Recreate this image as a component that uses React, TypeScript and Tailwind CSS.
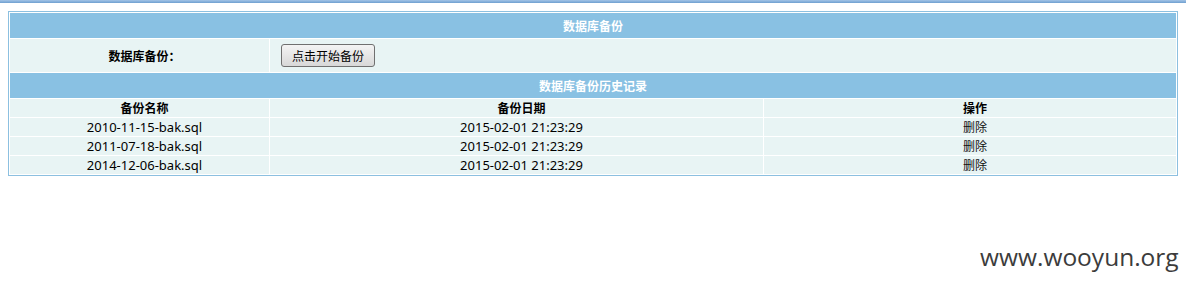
const rows = [
  { name: "2010-11-15-bak.sql", date: "2015-02-01 21:23:29" },
  { name: "2011-07-18-bak.sql", date: "2015-02-01 21:23:29" },
  { name: "2014-12-06-bak.sql", date: "2015-02-01 21:23:29" },
];

const font = "font-['Noto_Sans','Noto_Sans_CJK_SC',sans-serif]";
const cjk = "font-['Noto_Sans_CJK_SC',sans-serif] text-[12px]";

export default function App() {
  return (
    <div className={`relative min-h-[285px] bg-white text-[12px] text-black ${font}`}>
      <div className="h-[3px] bg-gradient-to-b from-[#a3c4e6] to-[#6f9fd0]" />
      <div className="px-2 pt-2">
        <table className="w-full table-fixed border border-separate border-spacing-[1px] border-[#8cc0e0] bg-white">
          <colgroup>
            <col className="w-[259px]" />
            <col className="w-[493px]" />
            <col />
          </colgroup>
          <tbody>
            <tr>
              <td colSpan={3} className={`h-[25px] p-0 bg-[#89c1e3] text-center font-bold text-white ${cjk}`}>
                数据库备份
              </td>
            </tr>
            <tr>
              <td className={`h-[33px] p-0 pl-[10px] bg-[#e8f4f4] text-center font-bold ${cjk}`}>数据库备份：</td>
              <td colSpan={2} className="h-[33px] p-0 pl-[11px] bg-[#e8f4f4]">
                <button className={`flex h-[23px] w-[94px] items-center justify-center rounded-[3px] border border-[#707070] bg-gradient-to-b from-[#f4f4f4] to-[#d8d8d8] text-black ${cjk}`}>
                  点击开始备份
                </button>
              </td>
            </tr>
            <tr>
              <td colSpan={3} className={`h-[25px] p-0 bg-[#89c1e3] text-center font-bold text-white ${cjk}`}>
                数据库备份历史记录
              </td>
            </tr>
            <tr className={cjk}>
              <td className="h-[18px] p-0 pl-[10px] bg-[#e8f4f4] text-center font-bold">备份名称</td>
              <td className="h-[18px] p-0 pl-[10px] bg-[#e8f4f4] text-center font-bold">备份日期</td>
              <td className="h-[18px] p-0 pl-[10px] bg-[#e8f4f4] text-center font-bold">操作</td>
            </tr>
            {rows.map((r, i) => (
              <tr key={i}>
                <td className="h-[18px] p-0 pl-[10px] bg-[#e8f4f4] text-center text-[13px] leading-[18px]">{r.name}</td>
                <td className="h-[18px] p-0 pl-[10px] bg-[#e8f4f4] text-center text-[13px] leading-[18px]">{r.date}</td>
                <td className={`h-[18px] p-0 pl-[10px] bg-[#e8f4f4] text-center ${cjk}`}>
                  <a href="#" className="text-[#111]">删除</a>
                </td>
              </tr>
            ))}
          </tbody>
        </table>
      </div>
      <div className="absolute left-[980px] top-[239px] font-['Open_Sans',sans-serif] text-[24.5px] text-[#3c3c3c]">
        www.wooyun.org
      </div>
    </div>
  );
}
